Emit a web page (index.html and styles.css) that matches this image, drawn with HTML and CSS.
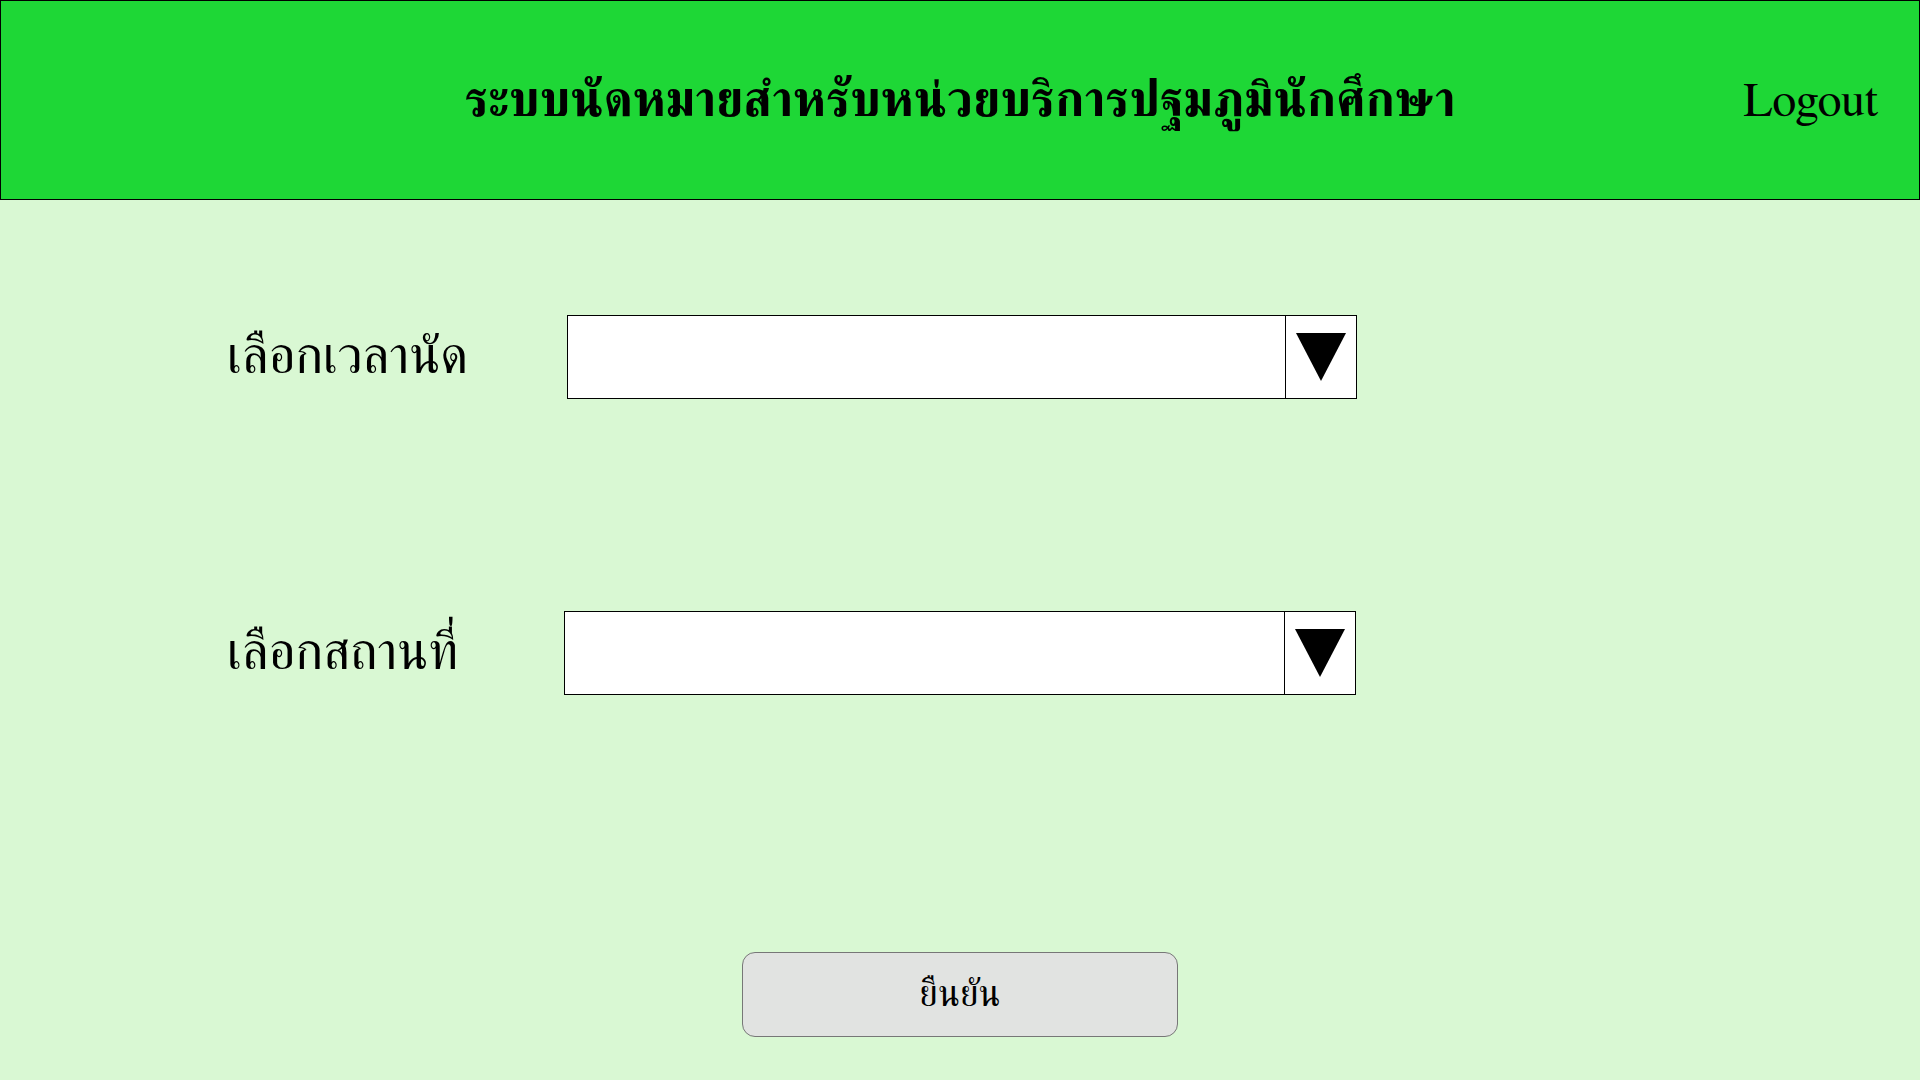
FILE: index.html
```html
<!DOCTYPE html>
<html lang="th">
<head>
<meta charset="utf-8">
<title>ระบบนัดหมาย</title>
<link rel="stylesheet" href="styles.css">
</head>
<body>
<header class="topbar">
  <h1 class="title">ระบบนัดหมายสำหรับหน่วยบริการปฐมภูมินักศึกษา</h1>
  <a class="logout" href="#">Logout</a>
</header>
<main class="content">
  <div class="row row-time">
    <label class="label">เลือกเวลานัด</label>
    <div class="select">
      <div class="select-value"></div>
      <div class="select-btn"><span class="tri"></span></div>
    </div>
  </div>
  <div class="row row-place">
    <label class="label">เลือกสถานที่</label>
    <div class="select">
      <div class="select-value"></div>
      <div class="select-btn"><span class="tri"></span></div>
    </div>
  </div>
  <div class="actions">
    <button class="confirm" type="button">ยืนยัน</button>
  </div>
</main>
</body>
</html>
```
FILE: styles.css
```css
* { box-sizing: border-box; }
html, body { margin: 0; padding: 0; }
body {
  width: 1920px;
  height: 1080px;
  background: #d9f8d3;
  font-family: "FreeSerif", "Liberation Serif", serif;
  color: #000;
  overflow: hidden;
}
.topbar {
  position: relative;
  height: 200px;
  background: #1ed736;
  border: 1px solid #000;
  display: flex;
  align-items: center;
  justify-content: center;
}
.title {
  margin: 4px 0 0;
  font-size: 49.5px;
  font-weight: bold;
  line-height: 1;
}
.logout {
  position: absolute;
  right: 41px;
  top: 77px;
  font-size: 48px;
  line-height: 1;
  color: #000;
  text-decoration: none;
}
.row {
  display: flex;
  align-items: center;
  padding-left: 227px;
}
.row-time { margin-top: 115px; }
.row-place { margin-top: 212px; }
.label {
  width: 340px;
  font-size: 52px;
}
.row-place .label { width: 337px; }
.select {
  width: 790px;
  height: 84px;
  background: #fff;
  border: 1px solid #000;
  display: flex;
}
.row-place .select { width: 792px; }
.select-value { flex: 1; }
.select-btn {
  width: 71px;
  border-left: 1px solid #000;
  display: flex;
  align-items: center;
  justify-content: center;
}
.tri {
  width: 0;
  height: 0;
  border-left: 25px solid transparent;
  border-right: 25px solid transparent;
  border-top: 48px solid #000;
}
.actions {
  display: flex;
  justify-content: center;
  margin-top: 257px;
}
.confirm {
  width: 436px;
  height: 85px;
  background: #e1e3e1;
  border: 1px solid #777;
  border-radius: 13px;
  font-family: "FreeSerif", "Liberation Serif", serif;
  font-size: 37px;
  font-weight: normal;
  color: #000;
  padding: 0;
}
```
